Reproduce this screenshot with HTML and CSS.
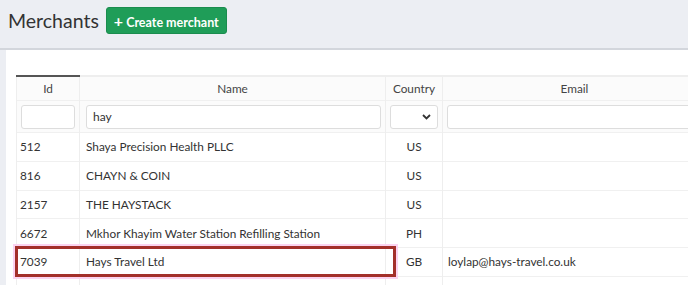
FILE: index.html
```html
<!DOCTYPE html>
<html lang="en">
<head>
    <meta charset="UTF-8">
    <meta name="viewport" content="width=device-width, initial-scale=1.0">
    <title>Merchants</title>
    <link rel="stylesheet" href="styles.css">
</head>
<body>
    <div class="page-header">
        <h1>Merchants</h1>
        <button class="btn-create"><span class="plus">+</span>Create merchant</button>
    </div>
    <div class="panel">
        <table class="grid">
            <thead>
                <tr class="titles">
                    <th class="col-id sorted">Id</th>
                    <th class="col-name">Name</th>
                    <th class="col-country">Country</th>
                    <th class="col-email">Email</th>
                </tr>
                <tr class="filters">
                    <td><input type="text"></td>
                    <td><input type="text" value="hay"></td>
                    <td>
                        <div class="select">
                            <svg width="9" height="6" viewBox="0 0 9 6"><path d="M1 1l3.5 3.5L8 1" fill="none" stroke="#333" stroke-width="1.8"/></svg>
                        </div>
                    </td>
                    <td><input type="text"></td>
                </tr>
            </thead>
            <tbody>
                <tr><td>512</td><td>Shaya Precision Health PLLC</td><td class="c">US</td><td></td></tr>
                <tr><td>816</td><td>CHAYN &amp; COIN</td><td class="c">US</td><td></td></tr>
                <tr><td>2157</td><td>THE HAYSTACK</td><td class="c">US</td><td></td></tr>
                <tr><td>6672</td><td>Mkhor Khayim Water Station Refilling Station</td><td class="c">PH</td><td></td></tr>
                <tr class="marked"><td>7039</td><td>Hays Travel Ltd</td><td class="c">GB</td><td>loylap@hays-travel.co.uk</td></tr>
                <tr><td></td><td></td><td></td><td></td></tr>
            </tbody>
        </table>
        <div class="highlight"></div>
    </div>
</body>
</html>
```

FILE: styles.css
```css
body {
    margin: 0;
    height: 100vh;
    background: #eceef3;
    font-family: "Lato", "Open Sans", sans-serif;
    color: #333;
    overflow: hidden;
}
.page-header {
    display: flex;
    align-items: center;
    gap: 7px;
    height: 50px;
    padding: 0 8px 8px;
    border-bottom: 2px solid #d3d6dc;
    box-sizing: border-box;
}
.page-header h1 {
    margin: 0;
    font-size: 19.5px;
    font-weight: 400;
    color: #333;
}
.btn-create {
    height: 27px;
    padding: 0 7px;
    background: #1f9d58;
    color: white;
    border: 1px solid #1a8c4e;
    border-radius: 3px;
    font-family: inherit;
    font-size: 12.5px;
    font-weight: 700;
}
.btn-create .plus {
    font-size: 16px;
    margin-right: 3px;
}
.panel {
    position: relative;
    background: white;
    margin-left: 6px;
    padding: 25px 0 0 10px;
    height: calc(100vh - 50px);
    box-sizing: border-box;
    overflow: hidden;
}
.grid {
    border-collapse: collapse;
    width: 690px;
    font-size: 11.8px;
}
.grid th {
    height: 23px;
    font-weight: 400;
    color: #444;
    background: #fbfbfb;
    border-left: 1px solid #eee;
    border-top: 2px solid #eee;
    padding: 0;
}
.grid th.sorted {
    border-top-color: #555;
}
.col-id { width: 62px; }
.col-name { width: 305px; }
.col-country { width: 56px; }
.grid td {
    border-left: 1px solid #eee;
    border-top: 1px solid #f0f0f0;
    padding: 0 3px;
    height: 28.75px;
    box-sizing: border-box;
    color: #333;
}
.grid td.c {
    text-align: center;
}
.grid tbody td:nth-child(2) {
    padding-left: 6px;
}
.grid tbody td:nth-child(4) {
    padding-left: 5px;
}
.filters td {
    height: 32px;
    background: #fbfbfb;
    padding: 0 4px;
}
.filters td:nth-child(2) {
    padding-left: 6px;
}
.filters input,
.filters .select {
    display: block;
    width: 100%;
    box-sizing: border-box;
    height: 24px;
    border: 1px solid #ddd;
    border-radius: 3px;
    background: white;
    font-family: inherit;
    font-size: 12px;
    color: #333;
    padding: 0 6px;
}
.filters .select {
    display: flex;
    align-items: center;
    justify-content: flex-end;
    padding-right: 6px;
}
.highlight {
    position: absolute;
    left: 9px;
    top: 196px;
    width: 381px;
    height: 31px;
    box-sizing: border-box;
    border: 3px solid #a3302a;
    box-shadow: 0 0 0 2px #fbd3f0;
}
```
